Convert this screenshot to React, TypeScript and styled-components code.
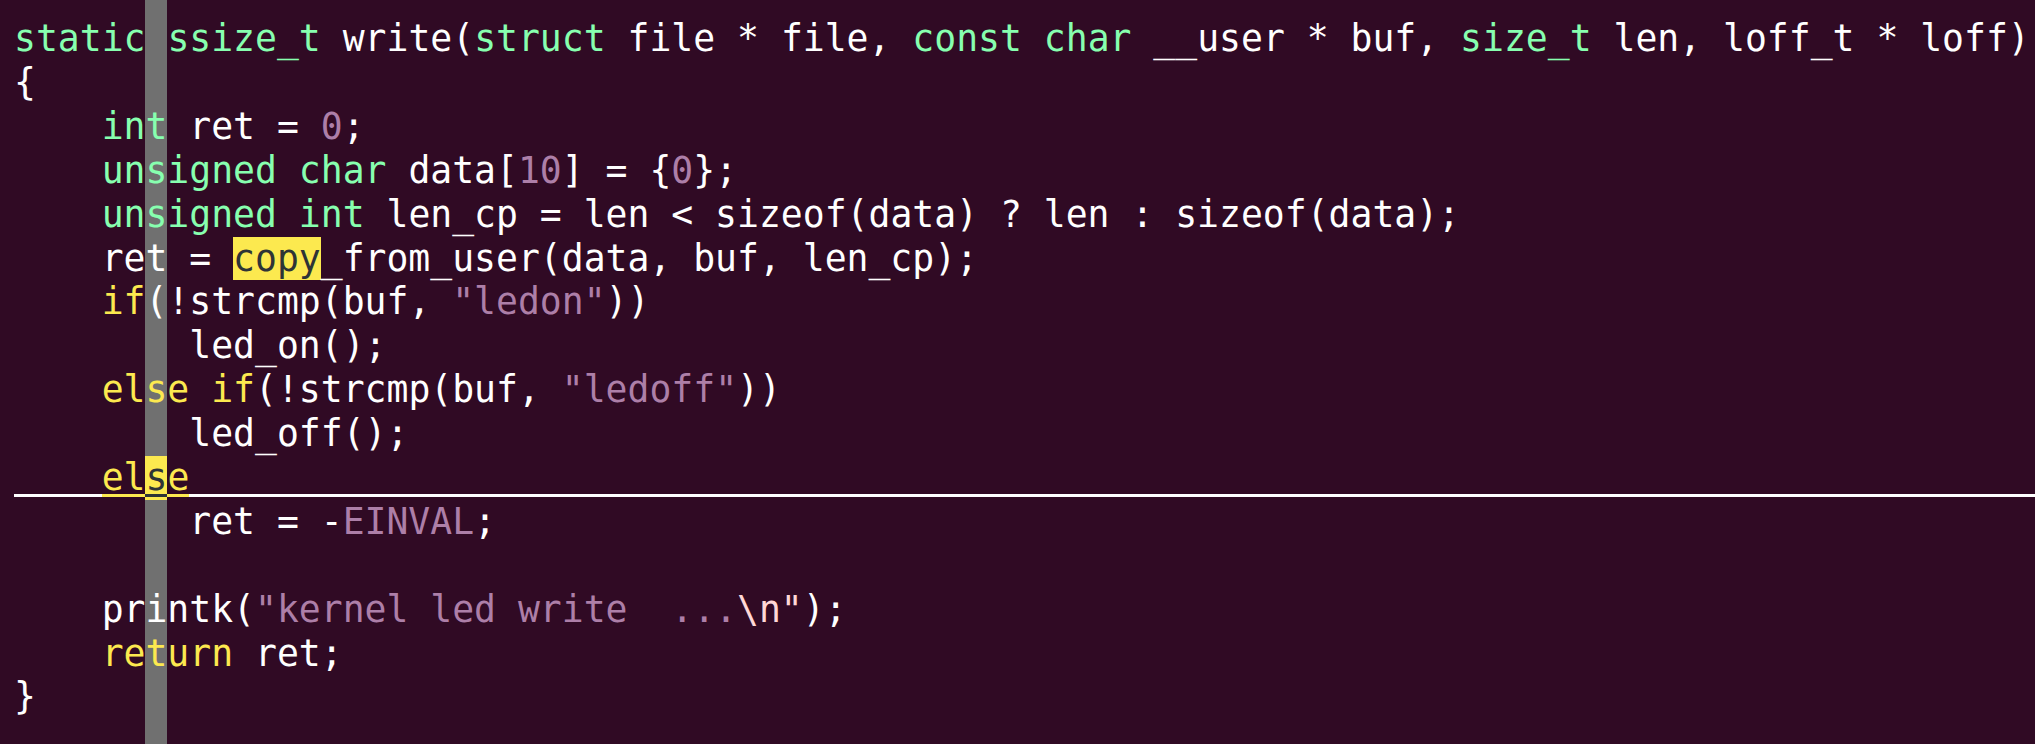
import React from "react";
import styled, { createGlobalStyle, css } from "styled-components";

const CELL = 21.91;
const LEFT = 14;
const ROW = 43.9;
const COLCOL = 6;

const GlobalStyle = createGlobalStyle`
  html, body {
    margin: 0;
    padding: 0;
    background: #300a24;
  }
`;

const Editor = styled.div`
  min-height: 100vh;
  box-sizing: border-box;
  padding: 17.1px 0 0 ${LEFT}px;
  background-color: #300a24;
  background-image: linear-gradient(
    to right,
    transparent ${LEFT + COLCOL * CELL}px,
    #707070 ${LEFT + COLCOL * CELL}px,
    #707070 ${LEFT + (COLCOL + 1) * CELL}px,
    transparent ${LEFT + (COLCOL + 1) * CELL}px
  );
  color: #ffffff;
  font-family: "DejaVu Sans Mono", "Liberation Mono", monospace;
  font-size: 36.4px;
  line-height: ${ROW}px;
  overflow: hidden;
`;

const Line = styled.div`
  height: ${ROW}px;
  white-space: pre;
`;

const CursorRow = styled.div`
  display: flex;
  height: ${ROW}px;
  white-space: pre;
`;

type Kind = "plain" | "type" | "stmt" | "const" | "special" | "search";

const kindStyles: Record<Kind, ReturnType<typeof css>> = {
  plain: css`color: #ffffff;`,
  type: css`color: #87ffaf;`,
  stmt: css`color: #fce94f;`,
  const: css`color: #ad7fa8;`,
  special: css`color: #ffd7d7;`,
  search: css`
    color: #2e3436;
    background-color: #fce94f;
  `,
};

const Tok = styled.span<{ $k: Kind }>`
  ${(p) => kindStyles[p.$k]}
`;

const UnderTok = styled.span<{ $k: Kind }>`
  display: inline-block;
  height: ${ROW}px;
  ${(p) => kindStyles[p.$k]}
  background-image: linear-gradient(currentColor, currentColor);
  background-repeat: no-repeat;
  background-size: 100% 3px;
  background-position: 0 38px;
`;

const UnderFill = styled.span`
  flex: 1;
  height: ${ROW}px;
  background-image: linear-gradient(#ffffff, #ffffff);
  background-repeat: no-repeat;
  background-size: 100% 3px;
  background-position: 0 38px;
`;

type Seg = [Kind, string];
const t = (s: string): Seg => ["type", s];
const k = (s: string): Seg => ["stmt", s];
const c = (s: string): Seg => ["const", s];
const p = (s: string): Seg => ["plain", s];

const lines: Seg[][] = [
  [
    t("static"), p(" "), t("ssize_t"), p(" write("), t("struct"),
    p(" file * file, "), t("const"), p(" "), t("char"),
    p(" __user * buf, "), t("size_t"), p(" len, loff_t * loff)"),
  ],
  [p("{")],
  [p("    "), t("int"), p(" ret = "), c("0"), p(";")],
  [p("    "), t("unsigned"), p(" "), t("char"), p(" data["), c("10"), p("] = {"), c("0"), p("};")],
  [p("    "), t("unsigned"), p(" "), t("int"), p(" len_cp = len < sizeof(data) ? len : sizeof(data);")],
  [p("    ret = "), ["search", "copy"], p("_from_user(data, buf, len_cp);")],
  [p("    "), k("if"), p("(!strcmp(buf, "), c("\"ledon\""), p("))")],
  [p("        led_on();")],
  [p("    "), k("else"), p(" "), k("if"), p("(!strcmp(buf, "), c("\"ledoff\""), p("))")],
  [p("        led_off();")],
  [],
  [p("        ret = -"), c("EINVAL"), p(";")],
  [p("")],
  [p("    printk("), c("\"kernel led write  ..."), ["special", "\\n\""], p(");")],
  [p("    "), k("return"), p(" ret;")],
  [p("}")],
];

const cursorLine: Seg[] = [p("    "), k("el"), ["search", "s"], k("e")];

export default function App() {
  return (
    <>
      <GlobalStyle />
      <Editor>
        {lines.map((segs, i) =>
          i === 10 ? (
            <CursorRow key={i}>
              {cursorLine.map(([kind, text], j) => (
                <UnderTok key={j} $k={kind}>
                  {text}
                </UnderTok>
              ))}
              <UnderFill />
            </CursorRow>
          ) : (
            <Line key={i}>
              {segs.length === 0 || (segs.length === 1 && segs[0][1] === "")
                ? " "
                : segs.map(([kind, text], j) => (
                    <Tok key={j} $k={kind}>
                      {text}
                    </Tok>
                  ))}
            </Line>
          )
        )}
      </Editor>
    </>
  );
}
